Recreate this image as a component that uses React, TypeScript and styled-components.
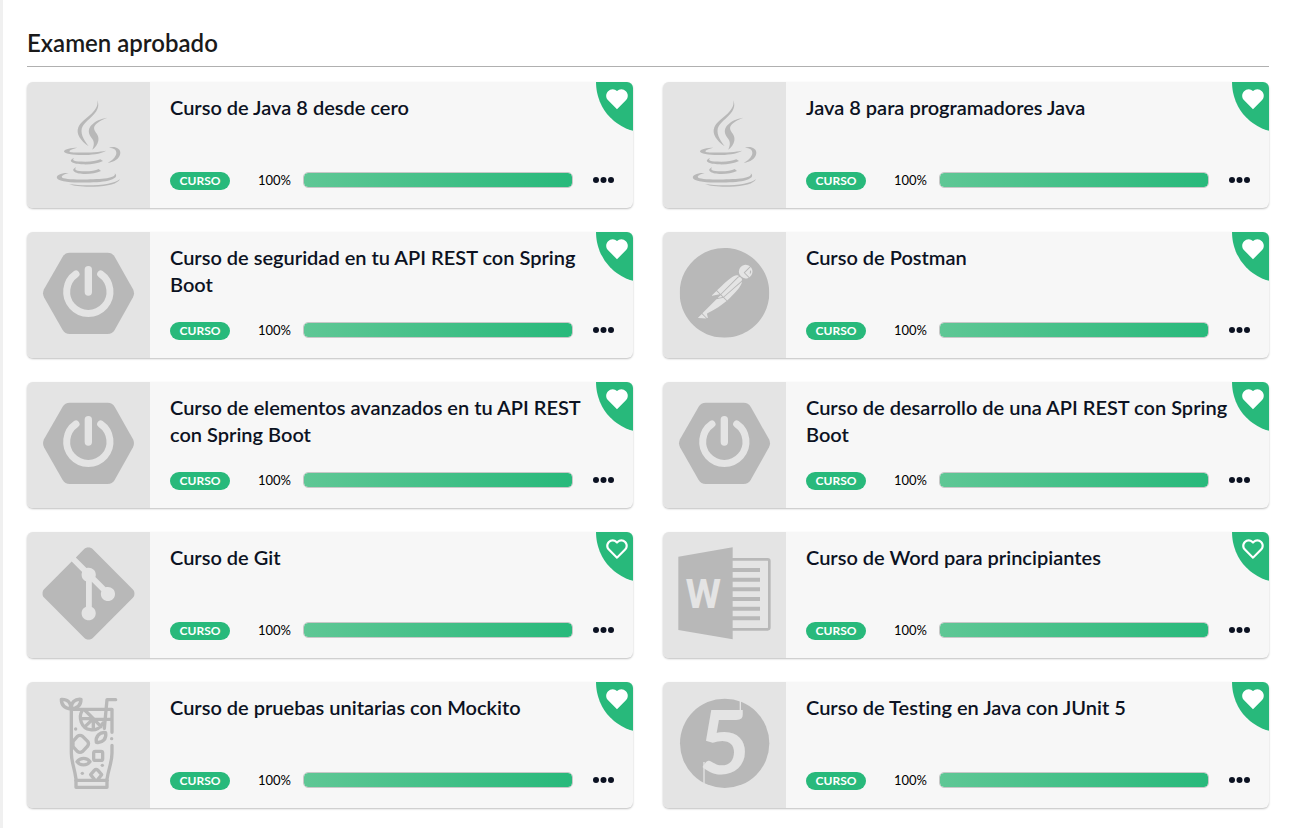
import React from "react";
import styled, { createGlobalStyle } from "styled-components";
import { BiHeart, BiSolidHeart } from "react-icons/bi";
import { SiGit, SiPostman } from "react-icons/si";

const green = "#28b97b";
const shape = "#b8b8b8";
const tile = "#e4e4e4";

const GlobalStyle = createGlobalStyle`
  *, *::before, *::after { box-sizing: border-box; }
  body {
    margin: 0;
    background: #fff;
    color: #0c1222;
    font-family: Lato, "Open Sans", sans-serif;
    font-variant-ligatures: none;
  }
`;

const Page = styled.main`
  min-height: 100vh;
  padding: 26px 24px 20px;
  border-left: 3px solid #f0f0f0;
`;

const SectionTitle = styled.h1`
  margin: 0 0 15px;
  padding-bottom: 6px;
  border-bottom: 1px solid #b0b0b0;
  color: #1a1a1a;
  font-size: 24px;
  font-weight: 600;
  line-height: 34px;
`;

const CourseGrid = styled.ul`
  display: grid;
  grid-template-columns: repeat(2, minmax(0, 1fr));
  gap: 24px 30px;
  margin: 0;
  padding: 0;
  list-style: none;
`;

const Card = styled.li`
  position: relative;
  display: flex;
  min-height: 126px;
  overflow: hidden;
  border-radius: 6px;
  background: #f7f7f7;
  box-shadow: 0 1px 2px rgba(0, 0, 0, 0.25);
`;

const Thumb = styled.div`
  flex: 0 0 123px;
  background: ${tile};
  svg { display: block; }
`;

const Body = styled.div`
  display: flex;
  flex: 1;
  flex-direction: column;
  justify-content: space-between;
  min-width: 0;
  padding: 12px 19px 18px 20px;
`;

const CourseTitle = styled.h2`
  margin: 0;
  padding-right: 20px;
  font-size: 20px;
  font-weight: 600;
  line-height: 27px;
`;

const Footer = styled.div`
  display: flex;
  align-items: flex-start;
`;

const Badge = styled.span`
  width: 60px;
  border-radius: 9px;
  background: ${green};
  color: #fff;
  font-size: 12px;
  font-weight: 700;
  line-height: 18px;
  text-align: center;
`;

const Percent = styled.span`
  width: 73px;
  padding-right: 12px;
  color: #000;
  font-size: 13px;
  font-weight: 400;
  line-height: 16px;
  text-align: right;
`;

const Track = styled.div`
  flex: 1;
  height: 16px;
  border: 1px solid #c8c8c8;
  border-radius: 5px;
  background: #fff;
  overflow: hidden;
`;

const Fill = styled.div`
  height: 100%;
  border-radius: 4px;
  background: linear-gradient(90deg, #5fc795, ${green});
`;

const MenuButton = styled.button`
  display: flex;
  margin-left: 20px;
  padding: 0;
  border: 0;
  background: none;
  color: inherit;
  cursor: pointer;
`;

const FavoriteButton = styled.button`
  position: absolute;
  top: 0;
  right: -11px;
  display: flex;
  width: 48px;
  height: 50px;
  padding: 4px 0 0 8px;
  border: 0;
  border-bottom-left-radius: 100%;
  background: ${green};
  color: #fff;
  cursor: pointer;
`;

type IconKind = "java" | "spring" | "postman" | "git" | "word" | "drink" | "junit";

function IconShapes({ kind }: { kind: IconKind }) {
  switch (kind) {
    case "java":
      return (
        <g fill={shape}>
          <path d="M211 55C225 90 183 108 167 133C157 151 170 174 185 193C161 177 146 155 154 136C165 110 218 91 211 55Z" />
          <path d="M241 107C216 116 197 129 202 143C206 153 217 160 214 176C212 188 204 196 196 203C201 190 203 181 196 171C183 155 182 143 193 130C204 117 222 110 241 107Z" />
          <path d="M151 197C136 201 125 205 128 209C135 214 210 212 237 206C229 213 204 218 174 219C145 220 109 216 111 208C113 201 133 197 151 197Z" />
          <path d="M246 197C262 191 281 199 280 213C279 230 261 240 242 243C254 236 267 226 268 214C269 203 260 198 246 197Z" />
          <path d="M141 228C134 236 140 239 175 239C195 239 208 236 220 232L228 237C213 244 190 248 168 247C139 246 119 238 141 228Z" />
          <path d="M147 256C141 264 147 268 174 268C192 268 206 266 215 261L222 267C208 274 188 277 169 276C144 275 128 265 147 256Z" />
          <path d="M125 273C112 276 100 283 106 287C120 294 202 294 240 289C257 286 267 281 263 274C274 283 264 291 243 296C204 304 105 305 91 290C83 279 107 271 125 273Z" />
          <path d="M279 291C273 305 244 313 200 314C169 315 140 312 126 306C162 312 213 311 243 305C260 302 272 297 279 291Z" />
        </g>
      );
    case "spring":
      return (
        <g transform="translate(0 -6)">
          <path
            fill={shape}
            d="M128 68H242Q256 68 263 80L318 178Q324 190 318 202L263 300Q256 312 242 312H128Q114 312 107 300L51 202Q45 190 51 178L107 80Q114 68 128 68Z"
          />
          <g fill="none" stroke={tile} strokeLinecap="round">
            <path strokeWidth="21" d="M147 132A65 65 0 1 0 221 132" />
            <path strokeWidth="22" d="M184 119V186" />
          </g>
        </g>
      );
    case "postman":
      return <SiPostman x={50} y={48} size={269} color={shape} />;
    case "git":
      return <SiGit x={46} y={46} size={277} color={shape} />;
    case "word":
      return (
        <g transform="translate(0 -6)">
          <path fill="none" stroke={shape} strokeWidth="8" d="M207 88H314Q319 88 319 93V292Q319 298 314 298H207" />
          <path stroke={shape} strokeWidth="12" d="M207 120H291M207 149H291M207 178H291M207 207H291M207 236H291M207 265H291" />
          <path fill={shape} d="M46 80L209 52V328L46 300Z" />
          <text
            x="121"
            y="235"
            fill={tile}
            fontFamily="Roboto, sans-serif"
            fontSize="122"
            fontWeight="700"
            textAnchor="middle"
          >
            W
          </text>
        </g>
      );
    case "drink":
      return (
        <g transform="translate(0 -3)" fill="none" stroke={shape} strokeWidth="10" strokeLinecap="round" strokeLinejoin="round">
          <path d="M133 87V215C133 244 142 257 147 294V319H240V294C246 257 255 244 255 215V193M133 85H255V154" />
          <path d="M147 298H240" />
          <path d="M132 84C110 82 103 69 103 55C122 54 132 65 132 84C132 65 143 53 162 55C162 70 154 82 132 84Z" />
          <path d="M266 56H240L232 142M202 115H253" />
          <path d="M165 90C154 108 162 143 190 146C207 149 221 140 228 126M173 87L199 113H163M199 113L174 137M199 113V146M199 113L222 137" />
          <path d="M151 166Q159 160 167 166L182 181Q187 188 182 195L167 211Q159 217 151 211L138 197V181Z" />
          <path d="M236 155C219 152 205 165 208 184C227 187 239 173 236 155Z" />
          <rect x="200" y="211" width="27" height="27" rx="5" />
          <path d="M150 242C160 229 180 229 189 242C180 255 159 255 150 242Z" />
          <path d="M191 281L202 268Q207 263 213 268L224 281L213 295M191 281L202 295" />
          <g fill={shape} stroke="none">
            <circle cx="146" cy="144" r="5" />
            <circle cx="254" cy="173" r="5" />
            <circle cx="226" cy="253" r="5" />
            <circle cx="166" cy="277" r="5" />
          </g>
        </g>
      );
    case "junit":
      return (
        <g transform="translate(0 -3)">
          <circle cx="185" cy="187" r="134" fill={shape} />
          <text
            x="184"
            y="280"
            fill={tile}
            fontFamily="Lato, sans-serif"
            fontSize="264"
            fontWeight="700"
            textAnchor="middle"
          >
            5
          </text>
          <path stroke={tile} strokeWidth="4" d="M232 58V110M123 243V308" />
        </g>
      );
  }
}

interface Course {
  title: string;
  icon: IconKind;
  favorite: boolean;
  progress: number;
}

const courses: Course[] = [
  { title: "Curso de Java 8 desde cero", icon: "java", favorite: true, progress: 100 },
  { title: "Java 8 para programadores Java", icon: "java", favorite: true, progress: 100 },
  { title: "Curso de seguridad en tu API REST con Spring Boot", icon: "spring", favorite: true, progress: 100 },
  { title: "Curso de Postman", icon: "postman", favorite: true, progress: 100 },
  { title: "Curso de elementos avanzados en tu API REST con Spring Boot", icon: "spring", favorite: true, progress: 100 },
  { title: "Curso de desarrollo de una API REST con Spring Boot", icon: "spring", favorite: true, progress: 100 },
  { title: "Curso de Git", icon: "git", favorite: false, progress: 100 },
  { title: "Curso de Word para principiantes", icon: "word", favorite: false, progress: 100 },
  { title: "Curso de pruebas unitarias con Mockito", icon: "drink", favorite: true, progress: 100 },
  { title: "Curso de Testing en Java con JUnit 5", icon: "junit", favorite: true, progress: 100 },
];

function CourseCard({ title, icon, favorite, progress }: Course) {
  return (
    <Card>
      <Thumb>
        <svg width="123" height="126" viewBox="0 0 369 378" aria-hidden="true">
          <IconShapes kind={icon} />
        </svg>
      </Thumb>
      <Body>
        <CourseTitle>{title}</CourseTitle>
        <Footer>
          <Badge>CURSO</Badge>
          <Percent>{progress}%</Percent>
          <Track role="progressbar" aria-label={title} aria-valuenow={progress} aria-valuemin={0} aria-valuemax={100}>
            <Fill style={{ width: `${progress}%` }} />
          </Track>
          <MenuButton type="button" aria-label="Opciones">
            <svg width="21" height="16" viewBox="0 0 21 16" fill="currentColor" aria-hidden="true">
              <circle cx="3" cy="8" r="3" />
              <circle cx="10.5" cy="8" r="3" />
              <circle cx="18" cy="8" r="3" />
            </svg>
          </MenuButton>
        </Footer>
      </Body>
      <FavoriteButton type="button" aria-label="Favorito" aria-pressed={favorite}>
        {favorite ? <BiSolidHeart size={26} /> : <BiHeart size={26} />}
      </FavoriteButton>
    </Card>
  );
}

export default function App() {
  return (
    <>
      <GlobalStyle />
      <Page>
        <SectionTitle>Examen aprobado</SectionTitle>
        <CourseGrid>
          {courses.map((course) => (
            <CourseCard key={course.title} {...course} />
          ))}
        </CourseGrid>
      </Page>
    </>
  );
}
